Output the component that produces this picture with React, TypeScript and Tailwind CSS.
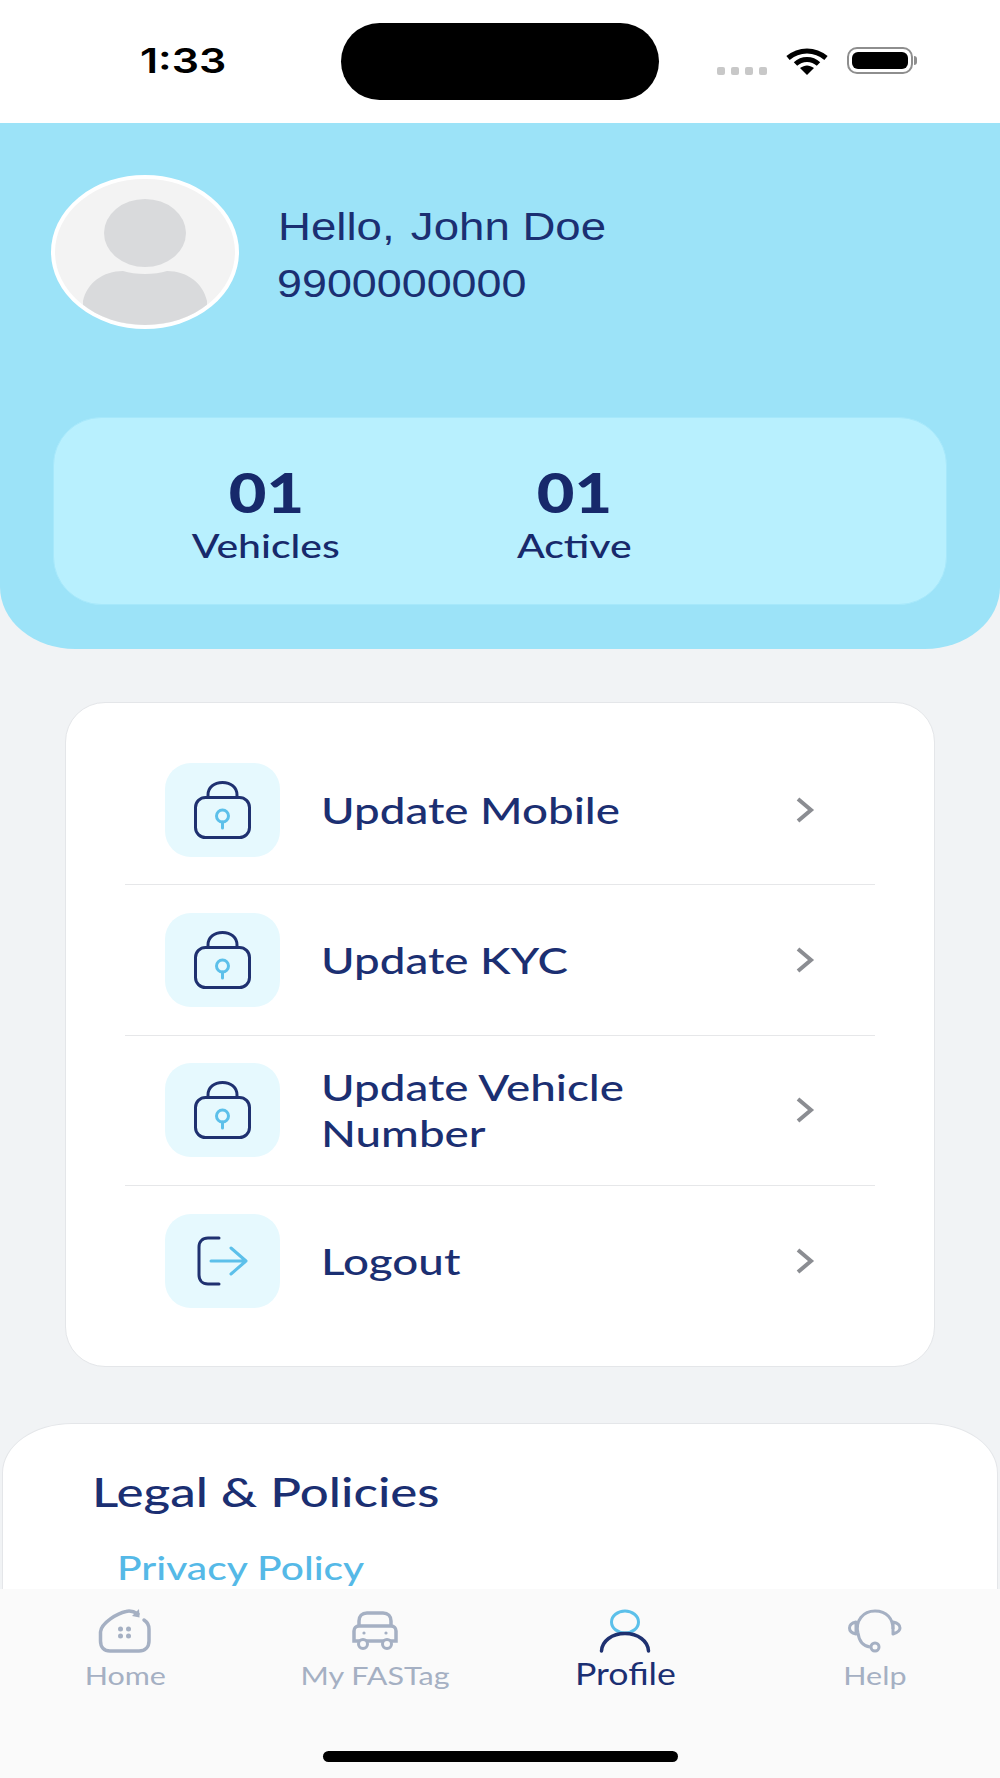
const Lock = () => (
  <svg width="57" height="58" viewBox="0 0 57 58" fill="none">
    <rect x="1.500" y="16.500" width="54" height="40" rx="10" stroke="#1f3170" strokeWidth="3" />
    <path d="M14 16V14C14 6.500 20 1.500 28.500 1.500S43 6.500 43 14V16" stroke="#1f3170" strokeWidth="3" />
    <circle cx="28.500" cy="35" r="6" stroke="#5cc0ea" strokeWidth="3" />
    <path d="M28.500 41V47" stroke="#5cc0ea" strokeWidth="3" strokeLinecap="round" />
  </svg>
);

const LogoutIcon = () => (
  <svg width="52" height="50" viewBox="0 0 52 50" fill="none">
    <path d="M22 2H11C5.500 2 2 5.500 2 11V39C2 44.500 5.500 48 11 48H22" stroke="#1f3170" strokeWidth="3" strokeLinecap="round" />
    <path d="M14 25H49M34 12L49 25L34 38" stroke="#5cc0ea" strokeWidth="3" strokeLinecap="round" strokeLinejoin="round" />
  </svg>
);

const Chevron = () => (
  <svg width="20" height="28" viewBox="0 0 20 28" fill="none">
    <path d="M3 3L16 14L3 25" stroke="#8b8d92" strokeWidth="4" />
  </svg>
);

const rows = [
  { label: "Update Mobile", icon: <Lock /> },
  { label: "Update KYC", icon: <Lock /> },
  { label: "Update Vehicle Number", icon: <Lock /> },
  { label: "Logout", icon: <LogoutIcon /> },
];

const HomeIcon = () => (
  <svg width="54" height="46" viewBox="0 0 54 46" fill="none">
    <path d="M40 6C36 3.500 32 2.500 28 3.500C20 5 3 15 2.500 24V33C2.500 39 6 43 12 43H41C47 43 51 39 51 33V21C51 17 49 14 46 12" stroke="#a5b0c3" strokeWidth="3.500" strokeLinecap="round" />
    <path d="M41 1L41.500 9.500L34 8" fill="#a5b0c3" />
    <circle cx="22.500" cy="21" r="2.500" fill="#a5b0c3" />
    <circle cx="30.500" cy="21" r="2.500" fill="#a5b0c3" />
    <circle cx="22.500" cy="28" r="2.500" fill="#a5b0c3" />
    <circle cx="30.500" cy="28" r="2.500" fill="#a5b0c3" />
  </svg>
);

const CarIcon = () => (
  <svg width="46" height="40" viewBox="0 0 46 40" fill="none">
    <path d="M7 16V10C7 5 10 2 15 2H31C36 2 39 5 39 10V16" stroke="#a5b0c3" strokeWidth="3.500" />
    <path d="M7 15H39C42 15 44 17 44 20V30H2V20C2 17 4 15 7 15Z" stroke="#a5b0c3" strokeWidth="3.500" />
    <circle cx="11" cy="33" r="4.500" stroke="#a5b0c3" strokeWidth="3" fill="#fafafa" />
    <circle cx="35" cy="33" r="4.500" stroke="#a5b0c3" strokeWidth="3" fill="#fafafa" />
    <circle cx="12" cy="22" r="1.600" fill="#a5b0c3" />
    <circle cx="34" cy="22" r="1.600" fill="#a5b0c3" />
  </svg>
);

const ProfileIcon = () => (
  <svg width="52" height="44" viewBox="0 0 52 44" fill="none">
    <ellipse cx="26" cy="13" rx="13.500" ry="11" stroke="#5cc0ea" strokeWidth="3" />
    <path d="M2.500 42C3 32 13 24.500 26 24.500S49 32 49.500 42" stroke="#1f3170" strokeWidth="3.500" strokeLinecap="round" />
  </svg>
);

const HelpIcon = () => (
  <svg width="54" height="44" viewBox="0 0 54 44" fill="none">
    <path d="M10 24C7 12 15 2 27 2S45 10 45 20" stroke="#a5b0c3" strokeWidth="3" />
    <path d="M8 13C3 14 1.500 17 1.500 19S3 24 8 25Z" stroke="#a5b0c3" strokeWidth="3" strokeLinejoin="round" />
    <path d="M45 13C50 14 52 16 52 19S50 23.500 45 25Z" stroke="#a5b0c3" strokeWidth="3" strokeLinejoin="round" />
    <path d="M10 24C11 32 15 37 22 38" stroke="#a5b0c3" strokeWidth="3" />
    <circle cx="27" cy="38" r="4" stroke="#a5b0c3" strokeWidth="3" />
  </svg>
);

const tabs = [
  { label: "Home", icon: <HomeIcon />, active: false },
  { label: "My FASTag", icon: <CarIcon />, active: false },
  { label: "Profile", icon: <ProfileIcon />, active: true },
  { label: "Help", icon: <HelpIcon />, active: false },
];

export default function App() {
  return (
    <div className="relative h-[1778px] w-[1000px] overflow-hidden bg-[#f1f3f5] font-['Lato',sans-serif]">
      {/* status bar */}
      <div className="flex h-[123px] items-start bg-white">
        <span className="ml-[140px] mt-[38px] inline-block w-[70px] origin-left scale-x-[1.26] font-['Inter',sans-serif] text-[34px] font-semibold leading-[46px] text-black">
          1:33
        </span>
        <div className="ml-[131px] mt-[23px] h-[77px] w-[318px] rounded-[39px] bg-black" />
        <div className="ml-[58px] mt-[67px] flex gap-[6px]">
          <span className="h-[8px] w-[8px] rounded-[2px] bg-[#c8c8c8]" />
          <span className="h-[8px] w-[8px] rounded-[2px] bg-[#c8c8c8]" />
          <span className="h-[8px] w-[8px] rounded-[2px] bg-[#c8c8c8]" />
          <span className="h-[8px] w-[8px] rounded-[2px] bg-[#c8c8c8]" />
        </div>
        <svg className="ml-[18px] mt-[47px]" width="44" height="28" viewBox="0 0 44 28" fill="none">
          <path d="M3 11C14 1.500 30 1.500 41 11" stroke="black" strokeWidth="5" />
          <path d="M10.500 17C17 11 27 11 33.500 17" stroke="black" strokeWidth="5" />
          <path d="M15 21C20 17.500 24 17.500 29 21L22 28Z" fill="black" />
        </svg>
        <div className="ml-[18px] mt-[47px] flex items-center">
          <div className="h-[27px] w-[66px] rounded-[10px] border-2 border-[#8e8e8e] p-[3px]">
            <div className="h-full w-full rounded-[6px] bg-black" />
          </div>
          <div className="ml-[1px] h-[9px] w-[3px] rounded-r-sm bg-[#8e8e8e]" />
        </div>
      </div>

      {/* header */}
      <div className="rounded-bl-[75px_62px] rounded-br-[75px_62px] bg-[#9ce3f8] pb-[44px] pl-[51px] pt-[52px]">
        <div className="flex items-start">
          <svg width="188" height="154" viewBox="0 0 188 154" className="shrink-0">
            <defs>
              <clipPath id="avatarClip">
                <ellipse cx="94" cy="77" rx="90" ry="73" />
              </clipPath>
            </defs>
            <ellipse cx="94" cy="77" rx="92" ry="75" fill="#f3f3f3" stroke="#ffffff" strokeWidth="4" />
            <g clipPath="url(#avatarClip)">
              <ellipse cx="94" cy="58" rx="41" ry="34" fill="#d9dadc" />
              <path d="M32 154V126C36 108 52 96 72 96C84 100 104 100 116 96C136 96 152 108 156 126V154Z" fill="#d9dadc" />
            </g>
          </svg>
          <div className="ml-[39px] mt-[30px] whitespace-nowrap font-['Liberation_Sans',sans-serif] text-[38px] text-[#1b2f72]">
            <div className="origin-left scale-x-[1.2] leading-[44px]">
              Hello,<span className="ml-[3px]"> John Doe</span>
            </div>
            <div className="-ml-[1px] mt-[13px] origin-left scale-x-[1.18] leading-[44px]">9900000000</div>
          </div>
        </div>
        <div className="ml-[2px] mr-[53px] mt-[88px] flex h-[188px] rounded-[48px] border border-[#a6e8fb] bg-[#b8f0fe] pl-[58px] pt-[46px] text-[#17296b]">
          {[
            ["01", "Vehicles"],
            ["01", "Active"],
          ].map(([n, l]) => (
            <div key={l} className="flex w-[308px] flex-col items-center">
              <div className="scale-x-[1.16] text-[56px] font-black leading-[56px]">{n}</div>
              <div className="mt-[3px] scale-x-[1.24] text-[33px] font-medium leading-[44px]">{l}</div>
            </div>
          ))}
        </div>
      </div>

      {/* menu */}
      <div className="mx-[65px] mt-[53px] h-[665px] rounded-[40px] border border-[#e4e6e9] bg-white px-[59px] pt-[32px]">
        {rows.map((r, i) => (
          <div
            key={r.label}
            className={
              i < 3
                ? "flex h-[150.4px] items-center border-b border-[#e6e7e9] pl-[40px] pr-[60px]"
                : "flex h-[150.4px] items-center pl-[40px] pr-[60px]"
            }
          >
            <div className="flex h-[94px] w-[115px] items-center justify-center rounded-[26px] bg-[#e6f9fe]">{r.icon}</div>
            <div className="ml-[41px] w-[300px] origin-left scale-x-[1.235] text-[37px] font-medium leading-[46px] text-[#1b2f72]">
              {r.label}
            </div>
            <div className="ml-auto">
              <Chevron />
            </div>
          </div>
        ))}
      </div>

      {/* legal */}
      <div className="mx-[2px] mt-[56px] h-[400px] rounded-tl-[70px_50px] rounded-tr-[70px_50px] border border-[#e4e6e9] bg-white pl-[89px] pt-[43px]">
        <div className="w-[300px] origin-left scale-x-[1.245] whitespace-nowrap text-[41px] font-medium leading-[50px] text-[#1b2f72]">
          Legal &amp; Policies
        </div>
        <div className="ml-[25px] mt-[25px] w-[250px] origin-left scale-x-[1.235] whitespace-nowrap text-[33px] font-medium leading-[50px] text-[#55b9e7]">
          Privacy Policy
        </div>
      </div>

      {/* tab bar */}
      <div className="absolute bottom-0 left-0 h-[189px] w-full bg-[#fafafa]">
        <div className="grid grid-cols-4 pt-[19px]">
          {tabs.map((t) => (
            <div key={t.label} className="flex flex-col items-center">
              <div className="flex h-[46px] items-center justify-center">{t.icon}</div>
              <div
                className={
                  t.active
                    ? "mt-[1px] scale-x-[1.19] text-[30px] leading-[36px] text-[#1b2f72]"
                    : "mt-[3px] scale-x-[1.22] text-[25px] leading-[36px] text-[#a5b0c3]"
                }
              >
                {t.label}
              </div>
            </div>
          ))}
        </div>
        <div className="absolute bottom-[16px] left-[323px] h-[11px] w-[355px] rounded-full bg-black" />
      </div>
    </div>
  );
}
